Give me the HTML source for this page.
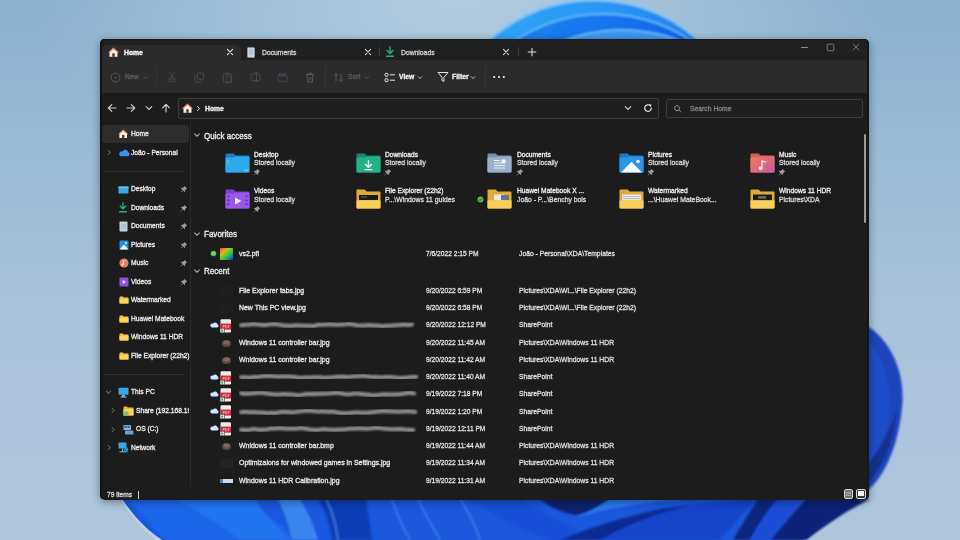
<!DOCTYPE html>
<html><head><meta charset="utf-8">
<style>
*{box-sizing:border-box;margin:0;padding:0}
html,body{width:960px;height:540px;overflow:hidden;background:#a9c3dc}
body{position:relative;font-family:"Liberation Sans",sans-serif;color:#fff}
#bg{position:absolute;left:0;top:0;width:960px;height:540px}
#win{position:absolute;left:100px;top:39px;width:769px;height:461px;background:#1c1c1c;border-radius:5px;overflow:hidden;box-shadow:0 2px 9px rgba(0,0,0,.38)}
.a{position:absolute;white-space:nowrap}
</style></head><body>
<svg id="bg" viewBox="0 0 960 540">
<defs>
 <linearGradient id="sky" x1="0" y1="0" x2="0" y2="1">
  <stop offset="0" stop-color="#8cb0cd"/>
  <stop offset="0.5" stop-color="#a5c1d9"/>
  <stop offset="0.75" stop-color="#acc4db"/>
  <stop offset="1" stop-color="#aec5dc"/>
 </linearGradient>
 <linearGradient id="arcOut" x1="0" y1="0" x2="1" y2="0">
  <stop offset="0" stop-color="#30a8f8"/>
  <stop offset="0.55" stop-color="#2a96f4"/>
  <stop offset="1" stop-color="#1f74ea"/>
 </linearGradient>
 <linearGradient id="arcMid" x1="0" y1="0" x2="1" y2="1">
  <stop offset="0" stop-color="#2290f4"/>
  <stop offset="0.55" stop-color="#0a58e6"/>
  <stop offset="1" stop-color="#0e5ce4"/>
 </linearGradient>
 <linearGradient id="bot" x1="120" y1="0" x2="870" y2="0" gradientUnits="userSpaceOnUse">
  <stop offset="0" stop-color="#2a78ec"/>
  <stop offset="0.08" stop-color="#1a62e4"/>
  <stop offset="0.16" stop-color="#1f74f0"/>
  <stop offset="0.2" stop-color="#1456dc"/>
  <stop offset="0.25" stop-color="#3a88f0"/>
  <stop offset="0.29" stop-color="#0e36a8"/>
  <stop offset="0.33" stop-color="#1a62e6"/>
  <stop offset="0.45" stop-color="#2a7af0"/>
  <stop offset="0.52" stop-color="#1452de"/>
  <stop offset="0.6" stop-color="#1a4ccc"/>
  <stop offset="0.72" stop-color="#1648d4"/>
  <stop offset="0.8" stop-color="#1238b8"/>
  <stop offset="0.86" stop-color="#1a4ed2"/>
  <stop offset="0.94" stop-color="#10329e"/>
  <stop offset="1" stop-color="#0d2680"/>
 </linearGradient>
 <radialGradient id="glow" cx="460" cy="0" r="430" gradientUnits="userSpaceOnUse" gradientTransform="translate(460 0) scale(1 0.5) translate(-460 0)">
  <stop offset="0" stop-color="#b2cce0" stop-opacity="1"/>
  <stop offset="0.5" stop-color="#acc8de" stop-opacity="0.65"/>
  <stop offset="1" stop-color="#a8c2da" stop-opacity="0"/>
 </radialGradient>
 <radialGradient id="glow2" cx="130" cy="530" r="60" gradientUnits="userSpaceOnUse">
  <stop offset="0" stop-color="#d4dde6" stop-opacity="0.9"/>
  <stop offset="1" stop-color="#c4d2e0" stop-opacity="0"/>
 </radialGradient>
 <radialGradient id="rblob" cx="0.3" cy="0.45" r="0.8">
  <stop offset="0" stop-color="#2458d4"/>
  <stop offset="1" stop-color="#1b44b8"/>
 </radialGradient>
 <filter id="soft" x="-5%" y="-5%" width="110%" height="110%"><feGaussianBlur stdDeviation="0.8"/></filter>
</defs>
<rect width="960" height="540" fill="url(#sky)"/>
<rect width="960" height="540" fill="url(#glow)"/>

<!-- top arc -->
<g filter="url(#soft)">
<ellipse cx="594" cy="119" rx="140" ry="120" fill="#7cc4f8"/>
<ellipse cx="594" cy="120" rx="138.5" ry="118.5" fill="url(#arcOut)"/>
<ellipse cx="603" cy="134" rx="141" ry="121" fill="#5cb8f8"/>
<ellipse cx="603" cy="135" rx="140" ry="120" fill="url(#arcMid)"/>
<ellipse cx="622" cy="89" rx="100" ry="60" fill="#66b6f6"/>
<ellipse cx="622" cy="90" rx="99" ry="59" fill="#3c96f0"/>
</g>
<!-- right shape -->
<g filter="url(#soft)">
<path d="M860,322 C890,336 906,372 902,408 C899,440 889,466 876,482 C856,505 830,522 804,540 L 600,540 L 600,322 Z" fill="#1b44bc"/>
<path d="M868,340 C886,360 892,390 889,418 C886,440 876,458 866,470 L 860,470 L 860,340 Z" fill="#2152d0" opacity="0.7"/>
<path d="M897,410 C894,440 885,462 873,477 C853,500 826,520 800,540 L 784,540 C 810,522 838,502 858,478 C 874,458 888,436 897,410 Z" fill="#13318f"/>
<path d="M902,408 C899,440 889,466 876,482 C856,505 830,522 804,540" stroke="#6f95dc" stroke-width="0.8" fill="none" opacity="0.6"/>
</g>
<!-- bottom -->
<path d="M122,499 C132,514 146,530 162,540 L 790,540 C 815,522 840,508 860,499 Z" fill="#1a58de"/>
<g filter="url(#soft)">
<path d="M128,499 C140,512 152,528 166,540 L 300,540 C 280,525 262,510 250,499 Z" fill="#1e66ea"/>
<path d="M175,499 C200,512 225,528 240,540 L 290,540 C 275,525 262,512 255,499 Z" fill="#2474f0"/>
<path d="M278,499 C284,512 290,528 292,540 L 318,540 C 314,526 308,512 300,499 Z" fill="#3a86ee"/>
<path d="M318,499 C326,512 330,526 332,540 L 372,540 C 370,526 368,512 366,499 Z" fill="#0f3cb6"/>
<path d="M326,499 C332,510 336,526 338,540" stroke="#5a9cf2" stroke-width="1.6" fill="none" opacity="0.7"/>
<path d="M392,499 C396,512 402,526 410,540" stroke="#4a92f0" stroke-width="1.4" fill="none" opacity="0.8"/>
<path d="M418,499 C424,512 432,526 440,540" stroke="#4a92f0" stroke-width="1.4" fill="none" opacity="0.8"/>
<path d="M460,499 C470,514 476,528 480,540" stroke="#4a92f0" stroke-width="1.4" fill="none" opacity="0.8"/>
<path d="M470,499 C490,512 520,530 550,540 L 600,540 C 570,528 540,512 520,499 Z" fill="#1650d8"/>
<path d="M540,499 L 610,499 C 600,506 590,512 575,515 C 560,512 548,506 540,499 Z" fill="#0a2070"/>
<path d="M575,518 C600,510 640,502 690,499 L 610,499 C 600,506 590,512 575,518 Z" fill="#2a7af0"/>
<path d="M560,540 C600,528 640,515 690,505 L 750,499 L 760,499 C 740,515 730,528 720,540 Z" fill="#1444cc"/>
<path d="M560,540 C590,528 620,518 660,509 L 690,505 C 650,515 620,528 600,540 Z" fill="#0c2a90"/>
<path d="M758,499 L 778,499 C 766,515 756,528 750,540 L 733,540 C 740,528 748,515 758,499 Z" fill="#0c2680"/>
<path d="M778,499 L 806,499 C 794,512 782,526 771,540 L 750,540 C 756,528 766,512 778,499 Z" fill="#1a4ed6"/>
<path d="M806,499 L 870,499 C 848,510 826,524 806,540 L 771,540 C 782,526 794,512 806,499 Z" fill="#0c2478"/>
</g>
<path d="M122,499 C132,514 146,530 162,540 L 156,540 C 142,530 130,515 120,499 Z" fill="#c8d6e4" opacity="0.6"/>
</svg>
<div id="win">
<div class="a" style="left:0.00px;top:0.00px;width:769px;height:21px;background:#202020"></div><div class="a" style="left:1.00px;top:5.50px;width:140px;height:16px;background:#2b2b2b;border-radius:6px 6px 0 0"></div><div class="a" style="left:0.00px;top:21.00px;width:769px;height:32.5px;background:#2b2b2b"></div><svg class="a" style="left:8.00px;top:8.00px" width="11.0" height="10.0" viewBox="0 0 11 10"><path d="M5.5 0.8 L10.4 5.2 L9.5 5.2 L9.5 9.8 L1.5 9.8 L1.5 5.2 L0.6 5.2 Z" fill="#fbefe4"/><path d="M5.5 0.4 L10.8 5.3 L9.9 5.9 L5.5 1.9 L1.1 5.9 L0.2 5.3 Z" fill="#d9794a"/><rect x="4.3" y="6.3" width="2.4" height="3.5" fill="#4a3530"/></svg><div class="a" style="left:23.60px;top:8.70px;font-size:7.8px;letter-spacing:0px;color:#ffffff;font-weight:bold;line-height:10px;-webkit-text-stroke:0.35px #ffffff;transform:scaleX(0.87);transform-origin:0 0;">Home</div><svg class="a" style="left:125.70px;top:8.80px" width="8" height="8" viewBox="0 0 8 8"><path d="M1.4 1.4 L6.6 6.6 M6.6 1.4 L1.4 6.6" stroke="#e6e6e6" stroke-width="1.1" stroke-linecap="round"/></svg><svg class="a" style="left:147.00px;top:7.50px" width="8" height="11" viewBox="0 0 8 11"><rect x="0.5" y="0.5" width="7" height="10" rx="0.8" fill="#c9d6e2"/><rect x="0.5" y="0.5" width="7" height="10" rx="0.8" fill="none" stroke="#8fa3b5" stroke-width="0.6"/><path d="M2 3h4M2 5h4M2 7h4" stroke="#7f93a6" stroke-width="0.6"/></svg><div class="a" style="left:162.00px;top:8.70px;font-size:7.8px;letter-spacing:0px;color:#cfcfcf;font-weight:normal;line-height:10px;-webkit-text-stroke:0.35px #cfcfcf;transform:scaleX(0.87);transform-origin:0 0;">Documents</div><svg class="a" style="left:263.50px;top:8.80px" width="8" height="8" viewBox="0 0 8 8"><path d="M1.4 1.4 L6.6 6.6 M6.6 1.4 L1.4 6.6" stroke="#d0d0d0" stroke-width="1.1" stroke-linecap="round"/></svg><div class="a" style="left:279.00px;top:8.00px;width:1px;height:9px;background:#3c3c3c"></div><svg class="a" style="left:285.00px;top:7.00px" width="10" height="12" viewBox="0 0 10 12"><path d="M5 1 V7.2 M2 4.6 L5 7.6 L8 4.6" stroke="#23b17f" stroke-width="1.4" fill="none" stroke-linecap="round" stroke-linejoin="round"/><rect x="1" y="9.6" width="8" height="1.4" rx="0.6" fill="#23b17f"/></svg><div class="a" style="left:301.00px;top:8.70px;font-size:7.8px;letter-spacing:0px;color:#cfcfcf;font-weight:normal;line-height:10px;-webkit-text-stroke:0.35px #cfcfcf;transform:scaleX(0.87);transform-origin:0 0;">Downloads</div><svg class="a" style="left:402.00px;top:8.80px" width="8" height="8" viewBox="0 0 8 8"><path d="M1.4 1.4 L6.6 6.6 M6.6 1.4 L1.4 6.6" stroke="#d0d0d0" stroke-width="1.1" stroke-linecap="round"/></svg><div class="a" style="left:418.00px;top:8.00px;width:1px;height:9px;background:#3c3c3c"></div><svg class="a" style="left:427.00px;top:8.00px" width="10" height="10" viewBox="0 0 10 10"><path d="M5 1.2 V8.8 M1.2 5 H8.8" stroke="#e0e0e0" stroke-width="1.1" stroke-linecap="round"/></svg><div class="a" style="left:701.00px;top:8.00px;width:6.5px;height:0.8px;background:#8c8c8c"></div><svg class="a" style="left:725.50px;top:3.50px" width="9" height="9" viewBox="0 0 9 9"><rect x="1.2" y="1.2" width="6.6" height="6.6" rx="1" fill="none" stroke="#8c8c8c" stroke-width="0.8"/></svg><svg class="a" style="left:752.00px;top:4.00px" width="8" height="8" viewBox="0 0 8 8"><path d="M1 1 L7 7 M7 1 L1 7" stroke="#8c8c8c" stroke-width="0.8" stroke-linecap="round"/></svg><svg class="a" style="left:10.00px;top:33.00px" width="11" height="11" viewBox="0 0 11 11"><circle cx="5.5" cy="5.5" r="4.4" fill="none" stroke="#5c5c5c" stroke-width="0.9"/><circle cx="5.5" cy="5.5" r="0.9" fill="#5c5c5c"/></svg><div class="a" style="left:25.00px;top:33.20px;font-size:7.8px;letter-spacing:0px;color:#5c5c5c;font-weight:normal;line-height:10px;-webkit-text-stroke:0.35px #5c5c5c;transform:scaleX(0.87);transform-origin:0 0;">New</div><svg class="a" style="left:42.50px;top:35.50px" width="6" height="5" viewBox="0 0 6 5"><path d="M1 1.5 L3 3.5 L5 1.5" stroke="#5c5c5c" stroke-width="0.9" fill="none"/></svg><div class="a" style="left:56.00px;top:27.00px;width:1px;height:21px;background:#353535"></div><svg class="a" style="left:67.00px;top:32.00px" width="10" height="12" viewBox="0 0 10 12"><path d="M2.5 1 L7 8 M7.5 1 L3 8" stroke="#3f4e5a" stroke-width="0.9" fill="none"/><circle cx="2.6" cy="9.3" r="1.7" fill="none" stroke="#3f4e5a" stroke-width="0.9"/><circle cx="7.4" cy="9.3" r="1.7" fill="none" stroke="#3f4e5a" stroke-width="0.9"/></svg><svg class="a" style="left:94.00px;top:33.00px" width="11" height="11" viewBox="0 0 11 11"><rect x="3.5" y="1" width="6" height="6.5" rx="1.2" fill="none" stroke="#3f4e5a" stroke-width="0.9"/><path d="M2.3 3 A1.3 1.3 0 0 0 1 4.3 V8.6 A1.4 1.4 0 0 0 2.4 10 H6.8 A1.3 1.3 0 0 0 8 8.8" fill="none" stroke="#3f4e5a" stroke-width="0.9"/></svg><svg class="a" style="left:121.50px;top:32.50px" width="11" height="11" viewBox="0 0 11 11"><rect x="1.3" y="2" width="8.4" height="8.4" rx="1.2" fill="none" stroke="#3f4e5a" stroke-width="0.9"/><rect x="3.5" y="1" width="4" height="2.2" rx="0.6" fill="none" stroke="#3f4e5a" stroke-width="0.8"/><rect x="4" y="5" width="4.5" height="5.2" fill="none" stroke="#3f4e5a" stroke-width="0.8"/></svg><svg class="a" style="left:149.50px;top:33.00px" width="11" height="10" viewBox="0 0 11 10"><rect x="1" y="2" width="9" height="6.5" rx="1" fill="none" stroke="#3f4e5a" stroke-width="0.9"/><path d="M6.5 0.8 V9.6 M5.2 0.8 H7.8 M5.2 9.6 H7.8" stroke="#3f4e5a" stroke-width="0.9"/></svg><svg class="a" style="left:177.00px;top:33.00px" width="11" height="10" viewBox="0 0 11 10"><rect x="1" y="3" width="9" height="6.3" rx="1.2" fill="none" stroke="#3f4e5a" stroke-width="0.9"/><circle cx="3.8" cy="2.8" r="1.6" fill="none" stroke="#3f4e5a" stroke-width="0.9"/><circle cx="7.2" cy="2.8" r="1.6" fill="none" stroke="#3f4e5a" stroke-width="0.9"/></svg><svg class="a" style="left:205.00px;top:32.50px" width="10" height="11" viewBox="0 0 10 11"><path d="M1 2.5 H9 M3.6 2.4 V1.1 H6.4 V2.4 M2 2.6 L2.6 10 H7.4 L8 2.6" fill="none" stroke="#5c5c5c" stroke-width="0.9"/><path d="M4.2 4.6 V8.2 M5.8 4.6 V8.2" stroke="#5c5c5c" stroke-width="0.7"/></svg><div class="a" style="left:225.00px;top:27.00px;width:1px;height:21px;background:#353535"></div><svg class="a" style="left:233.00px;top:33.00px" width="12" height="11" viewBox="0 0 12 11"><path d="M3 9.5 V1.5 M1 3.5 L3 1.5 L5 3.5 M8 1.5 V9.5 M6 7.5 L8 9.5 L10 7.5" stroke="#5c5c5c" stroke-width="0.9" fill="none"/></svg><div class="a" style="left:248.30px;top:33.20px;font-size:7.8px;letter-spacing:0px;color:#5c5c5c;font-weight:normal;line-height:10px;-webkit-text-stroke:0.35px #5c5c5c;transform:scaleX(0.87);transform-origin:0 0;">Sort</div><svg class="a" style="left:264.00px;top:35.50px" width="6" height="5" viewBox="0 0 6 5"><path d="M1 1.5 L3 3.5 L5 1.5" stroke="#5c5c5c" stroke-width="0.9" fill="none"/></svg><svg class="a" style="left:283.50px;top:32.50px" width="12" height="11" viewBox="0 0 12 11"><rect x="1" y="1.3" width="3" height="3" rx="1" fill="none" stroke="#e4e4e4" stroke-width="1"/><rect x="1" y="6.7" width="3" height="3" rx="1" fill="none" stroke="#e4e4e4" stroke-width="1"/><path d="M5.8 2.8 H11 M5.8 8.2 H11" stroke="#e4e4e4" stroke-width="1"/></svg><div class="a" style="left:299.00px;top:33.20px;font-size:7.8px;letter-spacing:0px;color:#f2f2f2;font-weight:bold;line-height:10px;-webkit-text-stroke:0.35px #f2f2f2;transform:scaleX(0.87);transform-origin:0 0;">View</div><svg class="a" style="left:317.00px;top:35.50px" width="6" height="5" viewBox="0 0 6 5"><path d="M1 1.5 L3 3.5 L5 1.5" stroke="#cfcfcf" stroke-width="0.9" fill="none"/></svg><svg class="a" style="left:336.50px;top:32.00px" width="12" height="12" viewBox="0 0 12 12"><path d="M1 1.5 H11 L7 6.3 V10.5 L5 9.3 V6.3 Z" stroke="#e4e4e4" stroke-width="1" fill="none" stroke-linejoin="round"/></svg><div class="a" style="left:351.80px;top:33.20px;font-size:7.8px;letter-spacing:0px;color:#f2f2f2;font-weight:bold;line-height:10px;-webkit-text-stroke:0.35px #f2f2f2;transform:scaleX(0.87);transform-origin:0 0;">Filter</div><svg class="a" style="left:369.50px;top:35.50px" width="6" height="5" viewBox="0 0 6 5"><path d="M1 1.5 L3 3.5 L5 1.5" stroke="#cfcfcf" stroke-width="0.9" fill="none"/></svg><div class="a" style="left:384.50px;top:27.00px;width:1px;height:21px;background:#353535"></div><svg class="a" style="left:392.00px;top:36.00px" width="14" height="4" viewBox="0 0 14 4"><circle cx="2.2" cy="2" r="1.1" fill="#eeeeee"/><circle cx="7" cy="2" r="1.1" fill="#eeeeee"/><circle cx="11.8" cy="2" r="1.1" fill="#eeeeee"/></svg><svg class="a" style="left:6.50px;top:64.00px" width="10" height="10" viewBox="0 0 10 10"><path d="M9 5 H1.5 M4.8 1.6 L1.3 5 L4.8 8.4" stroke="#cfcfcf" stroke-width="1.1" fill="none" stroke-linecap="round" stroke-linejoin="round"/></svg><svg class="a" style="left:26.00px;top:64.00px" width="10" height="10" viewBox="0 0 10 10"><path d="M1 5 H8.5 M5.2 1.6 L8.7 5 L5.2 8.4" stroke="#cfcfcf" stroke-width="1.1" fill="none" stroke-linecap="round" stroke-linejoin="round"/></svg><svg class="a" style="left:44.50px;top:66.00px" width="8" height="6" viewBox="0 0 8 6"><path d="M1.2 1.6 L4 4.4 L6.8 1.6" stroke="#cfcfcf" stroke-width="1.1" fill="none" stroke-linecap="round"/></svg><svg class="a" style="left:61.00px;top:64.00px" width="10" height="10" viewBox="0 0 10 10"><path d="M5 9 V1.5 M1.6 4.8 L5 1.3 L8.4 4.8" stroke="#dcdcdc" stroke-width="1.1" fill="none" stroke-linecap="round" stroke-linejoin="round"/></svg><div class="a" style="left:77.50px;top:59.40px;width:481px;height:20.4px;background:#1f1f1f;border:1px solid #3c3c3c;border-radius:2px"></div><svg class="a" style="left:82.00px;top:64.30px" width="11.0" height="10.0" viewBox="0 0 11 10"><path d="M5.5 0.8 L10.4 5.2 L9.5 5.2 L9.5 9.8 L1.5 9.8 L1.5 5.2 L0.6 5.2 Z" fill="#fbefe4"/><path d="M5.5 0.4 L10.8 5.3 L9.9 5.9 L5.5 1.9 L1.1 5.9 L0.2 5.3 Z" fill="#d9794a"/><rect x="4.3" y="6.3" width="2.4" height="3.5" fill="#4a3530"/></svg><svg class="a" style="left:95.50px;top:65.50px" width="5" height="7" viewBox="0 0 5 7"><path d="M1.2 1.2 L3.6 3.5 L1.2 5.8" stroke="#e0e0e0" stroke-width="1" fill="none"/></svg><div class="a" style="left:104.50px;top:64.70px;font-size:7.8px;letter-spacing:0px;color:#f2f2f2;font-weight:bold;line-height:10px;-webkit-text-stroke:0.35px #f2f2f2;transform:scaleX(0.87);transform-origin:0 0;">Home</div><svg class="a" style="left:524.00px;top:66.00px" width="8" height="6" viewBox="0 0 8 6"><path d="M1.2 1.6 L4 4.4 L6.8 1.6" stroke="#cfcfcf" stroke-width="1.1" fill="none" stroke-linecap="round"/></svg><svg class="a" style="left:543.00px;top:64.00px" width="10" height="10" viewBox="0 0 10 10"><path d="M8.3 5 A3.3 3.3 0 1 1 7.2 2.6" stroke="#e6e6e6" stroke-width="1.2" fill="none" stroke-linecap="round"/><path d="M5.6 1.2 L8.4 1.6 L7.8 4.2 Z" fill="#e6e6e6"/></svg><div class="a" style="left:566.00px;top:59.60px;width:197px;height:19.6px;background:#1f1f1f;border:1px solid #3c3c3c;border-radius:2px"></div><svg class="a" style="left:573.00px;top:64.50px" width="9" height="9" viewBox="0 0 9 9"><circle cx="4" cy="4.2" r="2.5" fill="none" stroke="#8c8c8c" stroke-width="1"/><path d="M5.9 6.1 L7.8 8" stroke="#8c8c8c" stroke-width="1" stroke-linecap="round"/></svg><div class="a" style="left:589.60px;top:64.50px;font-size:7.8px;letter-spacing:0px;color:#808080;font-weight:normal;line-height:10px;-webkit-text-stroke:0.35px #808080;transform:scaleX(0.87);transform-origin:0 0;">Search Home</div><div class="a" style="left:90.00px;top:82.00px;width:1px;height:366px;background:#2a2a2a"></div><div class="a" style="left:1.00px;top:85.70px;width:88px;height:18px;background:#2d2d2d;border-radius:4px"></div><svg class="a" style="left:17.78px;top:89.55px" width="10.45" height="9.5" viewBox="0 0 11 10"><path d="M5.5 0.8 L10.4 5.2 L9.5 5.2 L9.5 9.8 L1.5 9.8 L1.5 5.2 L0.6 5.2 Z" fill="#fbefe4"/><path d="M5.5 0.4 L10.8 5.3 L9.9 5.9 L5.5 1.9 L1.1 5.9 L0.2 5.3 Z" fill="#d9794a"/><rect x="4.3" y="6.3" width="2.4" height="3.5" fill="#4a3530"/></svg><div class="a" style="left:31.00px;top:89.70px;font-size:7.8px;letter-spacing:0px;color:#e8e8e8;font-weight:normal;line-height:10px;-webkit-text-stroke:0.35px #e8e8e8;transform:scaleX(0.855);transform-origin:0 0;">Home</div><svg class="a" style="left:5.50px;top:109.90px" width="6" height="7" viewBox="0 0 6 7"><path d="M2 1.2 L4.2 3.5 L2 5.8" stroke="#8a8a8a" stroke-width="0.9" fill="none"/></svg><svg class="a" style="left:17.50px;top:109.50px" width="12" height="8" viewBox="0 0 12 8"><path d="M3 7.2 H10 A2 2 0 0 0 10.2 3.3 A3 3 0 0 0 4.6 2.4 A2.4 2.4 0 0 0 3 7.2 Z" fill="#3f8ef0"/></svg><div class="a" style="left:31.00px;top:108.60px;font-size:7.8px;letter-spacing:0px;color:#e8e8e8;font-weight:normal;line-height:10px;-webkit-text-stroke:0.35px #e8e8e8;transform:scaleX(0.855);transform-origin:0 0;">João - Personal</div><div class="a" style="left:5.00px;top:132.00px;width:79px;height:1px;background:#333333"></div><svg class="a" style="left:18.30px;top:146.50px" width="11" height="8" viewBox="0 0 11 8"><rect x="0.5" y="0.5" width="10" height="7" rx="0.8" fill="#3aa6e6"/><rect x="0.5" y="0.5" width="10" height="2" fill="#5cc0f0"/></svg><div class="a" style="left:31.00px;top:145.20px;font-size:7.8px;letter-spacing:0px;color:#e8e8e8;font-weight:normal;line-height:10px;-webkit-text-stroke:0.35px #e8e8e8;transform:scaleX(0.855);transform-origin:0 0;">Desktop</div><svg class="a" style="left:80.30px;top:146.00px" width="8" height="8" viewBox="0 0 8 8"><path d="M4.6 0.9 L7.1 3.4 L6.2 3.9 L4.9 5.7 L5.2 6.6 L4.6 7.1 L0.9 3.4 L1.4 2.8 L2.3 3.1 L4.1 1.8 Z" fill="#9a9a9a"/><path d="M2.6 5.4 L0.8 7.2" stroke="#9a9a9a" stroke-width="0.8"/></svg><svg class="a" style="left:18.00px;top:163.00px" width="10" height="11" viewBox="0 0 10 11"><path d="M5 0.8 V6.6 M2.2 4 L5 6.9 L7.8 4" stroke="#2bb584" stroke-width="1.3" fill="none" stroke-linecap="round" stroke-linejoin="round"/><rect x="1" y="9" width="8" height="1.4" rx="0.6" fill="#2bb584"/></svg><div class="a" style="left:31.00px;top:163.70px;font-size:7.8px;letter-spacing:0px;color:#e8e8e8;font-weight:normal;line-height:10px;-webkit-text-stroke:0.35px #e8e8e8;transform:scaleX(0.855);transform-origin:0 0;">Downloads</div><svg class="a" style="left:80.30px;top:164.50px" width="8" height="8" viewBox="0 0 8 8"><path d="M4.6 0.9 L7.1 3.4 L6.2 3.9 L4.9 5.7 L5.2 6.6 L4.6 7.1 L0.9 3.4 L1.4 2.8 L2.3 3.1 L4.1 1.8 Z" fill="#9a9a9a"/><path d="M2.6 5.4 L0.8 7.2" stroke="#9a9a9a" stroke-width="0.8"/></svg><svg class="a" style="left:18.50px;top:181.50px" width="9" height="11" viewBox="0 0 9 11"><rect x="0.5" y="0.5" width="8" height="10" rx="0.8" fill="#c3cfdb"/><path d="M2 3.4h5M2 5.4h5M2 7.4h5" stroke="#8d9fb0" stroke-width="0.6"/></svg><div class="a" style="left:31.00px;top:182.20px;font-size:7.8px;letter-spacing:0px;color:#e8e8e8;font-weight:normal;line-height:10px;-webkit-text-stroke:0.35px #e8e8e8;transform:scaleX(0.855);transform-origin:0 0;">Documents</div><svg class="a" style="left:80.30px;top:183.00px" width="8" height="8" viewBox="0 0 8 8"><path d="M4.6 0.9 L7.1 3.4 L6.2 3.9 L4.9 5.7 L5.2 6.6 L4.6 7.1 L0.9 3.4 L1.4 2.8 L2.3 3.1 L4.1 1.8 Z" fill="#9a9a9a"/><path d="M2.6 5.4 L0.8 7.2" stroke="#9a9a9a" stroke-width="0.8"/></svg><svg class="a" style="left:18.50px;top:200.50px" width="10" height="10" viewBox="0 0 10 10"><rect x="0.5" y="0.5" width="9" height="9" rx="1" fill="#2a8fe0"/><path d="M0.5 9.5 L5 4.6 L9.5 9.5 Z" fill="#eef6fc"/><circle cx="7" cy="3" r="1" fill="#eef6fc"/></svg><div class="a" style="left:31.00px;top:200.70px;font-size:7.8px;letter-spacing:0px;color:#e8e8e8;font-weight:normal;line-height:10px;-webkit-text-stroke:0.35px #e8e8e8;transform:scaleX(0.855);transform-origin:0 0;">Pictures</div><svg class="a" style="left:80.30px;top:201.50px" width="8" height="8" viewBox="0 0 8 8"><path d="M4.6 0.9 L7.1 3.4 L6.2 3.9 L4.9 5.7 L5.2 6.6 L4.6 7.1 L0.9 3.4 L1.4 2.8 L2.3 3.1 L4.1 1.8 Z" fill="#9a9a9a"/><path d="M2.6 5.4 L0.8 7.2" stroke="#9a9a9a" stroke-width="0.8"/></svg><svg class="a" style="left:18.50px;top:219.00px" width="10" height="10" viewBox="0 0 10 10"><circle cx="5" cy="5" r="4.6" fill="#e0806e"/><path d="M4.4 2.4 V6.4 M4.4 2.4 L6.4 3.2" stroke="#f6dcd6" stroke-width="0.9" fill="none"/><circle cx="3.7" cy="6.6" r="1.1" fill="#f6dcd6"/></svg><div class="a" style="left:31.00px;top:219.20px;font-size:7.8px;letter-spacing:0px;color:#e8e8e8;font-weight:normal;line-height:10px;-webkit-text-stroke:0.35px #e8e8e8;transform:scaleX(0.855);transform-origin:0 0;">Music</div><svg class="a" style="left:80.30px;top:220.00px" width="8" height="8" viewBox="0 0 8 8"><path d="M4.6 0.9 L7.1 3.4 L6.2 3.9 L4.9 5.7 L5.2 6.6 L4.6 7.1 L0.9 3.4 L1.4 2.8 L2.3 3.1 L4.1 1.8 Z" fill="#9a9a9a"/><path d="M2.6 5.4 L0.8 7.2" stroke="#9a9a9a" stroke-width="0.8"/></svg><svg class="a" style="left:18.50px;top:237.50px" width="10" height="10" viewBox="0 0 10 10"><rect x="0.5" y="0.5" width="9" height="9" rx="1" fill="#8f4fe0"/><path d="M3.8 3 L7 5 L3.8 7 Z" fill="#f0e6fb"/></svg><div class="a" style="left:31.00px;top:237.70px;font-size:7.8px;letter-spacing:0px;color:#e8e8e8;font-weight:normal;line-height:10px;-webkit-text-stroke:0.35px #e8e8e8;transform:scaleX(0.855);transform-origin:0 0;">Videos</div><svg class="a" style="left:80.30px;top:238.50px" width="8" height="8" viewBox="0 0 8 8"><path d="M4.6 0.9 L7.1 3.4 L6.2 3.9 L4.9 5.7 L5.2 6.6 L4.6 7.1 L0.9 3.4 L1.4 2.8 L2.3 3.1 L4.1 1.8 Z" fill="#9a9a9a"/><path d="M2.6 5.4 L0.8 7.2" stroke="#9a9a9a" stroke-width="0.8"/></svg><svg class="a" style="left:18.50px;top:257.00px" width="10" height="8" viewBox="0 0 10 8"><path d="M0.5 1.2 Q0.5 0.5 1.2 0.5 H3.8 L4.8 1.6 H9.3 Q9.5 1.6 9.5 2.3 V7.3 Q9.5 7.5 8.8 7.5 H1.2 Q0.5 7.5 0.5 6.8 Z" fill="#f0c040"/><rect x="0.5" y="2.8" width="9" height="4.7" rx="0.6" fill="#fbd460"/></svg><div class="a" style="left:31.00px;top:256.20px;font-size:7.8px;letter-spacing:0px;color:#e8e8e8;font-weight:normal;line-height:10px;-webkit-text-stroke:0.35px #e8e8e8;transform:scaleX(0.855);transform-origin:0 0;">Watermarked</div><svg class="a" style="left:18.50px;top:275.50px" width="10" height="8" viewBox="0 0 10 8"><path d="M0.5 1.2 Q0.5 0.5 1.2 0.5 H3.8 L4.8 1.6 H9.3 Q9.5 1.6 9.5 2.3 V7.3 Q9.5 7.5 8.8 7.5 H1.2 Q0.5 7.5 0.5 6.8 Z" fill="#f0c040"/><rect x="0.5" y="2.8" width="9" height="4.7" rx="0.6" fill="#fbd460"/></svg><div class="a" style="left:31.00px;top:274.70px;font-size:7.8px;letter-spacing:0px;color:#e8e8e8;font-weight:normal;line-height:10px;-webkit-text-stroke:0.35px #e8e8e8;transform:scaleX(0.855);transform-origin:0 0;">Huawei Matebook</div><svg class="a" style="left:18.50px;top:294.00px" width="10" height="8" viewBox="0 0 10 8"><path d="M0.5 1.2 Q0.5 0.5 1.2 0.5 H3.8 L4.8 1.6 H9.3 Q9.5 1.6 9.5 2.3 V7.3 Q9.5 7.5 8.8 7.5 H1.2 Q0.5 7.5 0.5 6.8 Z" fill="#f0c040"/><rect x="0.5" y="2.8" width="9" height="4.7" rx="0.6" fill="#fbd460"/></svg><div class="a" style="left:31.00px;top:293.20px;font-size:7.8px;letter-spacing:0px;color:#e8e8e8;font-weight:normal;line-height:10px;-webkit-text-stroke:0.35px #e8e8e8;transform:scaleX(0.855);transform-origin:0 0;">Windows 11 HDR</div><svg class="a" style="left:18.50px;top:312.50px" width="10" height="8" viewBox="0 0 10 8"><path d="M0.5 1.2 Q0.5 0.5 1.2 0.5 H3.8 L4.8 1.6 H9.3 Q9.5 1.6 9.5 2.3 V7.3 Q9.5 7.5 8.8 7.5 H1.2 Q0.5 7.5 0.5 6.8 Z" fill="#f0c040"/><rect x="0.5" y="2.8" width="9" height="4.7" rx="0.6" fill="#fbd460"/></svg><div class="a" style="left:31.00px;top:311.70px;font-size:7.8px;letter-spacing:0px;color:#e8e8e8;font-weight:normal;line-height:10px;-webkit-text-stroke:0.35px #e8e8e8;transform:scaleX(0.855);transform-origin:0 0;">File Explorer (22h2)</div><div class="a" style="left:5.00px;top:334.50px;width:79px;height:1px;background:#333333"></div><svg class="a" style="left:4.90px;top:350.00px" width="7" height="6" viewBox="0 0 7 6"><path d="M1.2 2 L3.5 4.2 L5.8 2" stroke="#9a9a9a" stroke-width="0.9" fill="none"/></svg><svg class="a" style="left:18.00px;top:347.50px" width="11" height="11" viewBox="0 0 11 11"><rect x="0.5" y="0.8" width="10" height="7" rx="0.8" fill="#3aa6e6"/><rect x="4" y="8" width="3" height="1.6" fill="#7fb8de"/><rect x="2.5" y="9.5" width="6" height="1" fill="#9cc8e6"/></svg><div class="a" style="left:31.00px;top:348.20px;font-size:7.8px;letter-spacing:0px;color:#e8e8e8;font-weight:normal;line-height:10px;-webkit-text-stroke:0.35px #e8e8e8;transform:scaleX(0.855);transform-origin:0 0;">This PC</div><svg class="a" style="left:10.00px;top:368.00px" width="6" height="7" viewBox="0 0 6 7"><path d="M2 1.2 L4.2 3.5 L2 5.8" stroke="#8a8a8a" stroke-width="0.9" fill="none"/></svg><svg class="a" style="left:22.50px;top:366.50px" width="11" height="10" viewBox="0 0 11 10"><path d="M0.5 1.2 Q0.5 0.5 1.2 0.5 H4 L5 1.6 H9.8 Q10.5 1.6 10.5 2.3 V9 Q10.5 9.5 9.8 9.5 H1.2 Q0.5 9.5 0.5 9 Z" fill="#e8b830"/><rect x="0.5" y="3" width="10" height="6.5" rx="0.6" fill="#f5d060"/><rect x="0.5" y="5.5" width="5" height="4" fill="#7cc070"/></svg><div class="a" style="left:0;top:0;width:89px;height:461px;overflow:hidden"><div class="a" style="left:35.80px;top:366.70px;font-size:7.8px;letter-spacing:0px;color:#e8e8e8;font-weight:normal;line-height:10px;-webkit-text-stroke:0.35px #e8e8e8;transform:scaleX(0.855);transform-origin:0 0;">Share (192.168.19</div></div><svg class="a" style="left:10.00px;top:386.50px" width="6" height="7" viewBox="0 0 6 7"><path d="M2 1.2 L4.2 3.5 L2 5.8" stroke="#8a8a8a" stroke-width="0.9" fill="none"/></svg><svg class="a" style="left:22.50px;top:384.50px" width="11" height="11" viewBox="0 0 11 11"><rect x="0.5" y="1" width="7.5" height="5" rx="0.5" fill="#8ab4d8"/><rect x="2" y="6.5" width="8.5" height="4" rx="0.5" fill="#6aa0cc"/><rect x="1.2" y="1.8" width="2.6" height="2" fill="#2a6ab0"/><rect x="4.4" y="1.8" width="2.6" height="2" fill="#2a6ab0"/></svg><div class="a" style="left:35.80px;top:385.20px;font-size:7.8px;letter-spacing:0px;color:#e8e8e8;font-weight:normal;line-height:10px;-webkit-text-stroke:0.35px #e8e8e8;transform:scaleX(0.855);transform-origin:0 0;">OS (C:)</div><svg class="a" style="left:5.50px;top:405.00px" width="6" height="7" viewBox="0 0 6 7"><path d="M2 1.2 L4.2 3.5 L2 5.8" stroke="#8a8a8a" stroke-width="0.9" fill="none"/></svg><svg class="a" style="left:18.00px;top:403.00px" width="11" height="11" viewBox="0 0 11 11"><rect x="0.5" y="0.5" width="8" height="6" rx="0.6" fill="#3aa6e6"/><path d="M4.5 6.5 V9.5 M1.5 9.8 H9.5" stroke="#7fc0e6" stroke-width="1"/><circle cx="8" cy="7.5" r="2.2" fill="#2a8ad0"/></svg><div class="a" style="left:31.00px;top:403.70px;font-size:7.8px;letter-spacing:0px;color:#e8e8e8;font-weight:normal;line-height:10px;-webkit-text-stroke:0.35px #e8e8e8;transform:scaleX(0.855);transform-origin:0 0;">Network</div><div class="a" style="left:7.40px;top:450.60px;font-size:7.8px;letter-spacing:0px;color:#d6d6d6;font-weight:normal;line-height:10px;-webkit-text-stroke:0.35px #d6d6d6;transform:scaleX(0.85);transform-origin:0 0;">79 items</div><div class="a" style="left:38.20px;top:451.50px;width:1px;height:8px;background:#cfcfcf"></div><div class="a" style="left:743.60px;top:450.00px;width:9.6px;height:9.7px;background:#6e6e6e;border:1.2px solid #d4d4d4;border-radius:2px"></div><svg class="a" style="left:745.20px;top:451.80px" width="6.4" height="6" viewBox="0 0 6.4 6"><path d="M0.5 1.2h5.4M0.5 2.8h5.4M0.5 4.4h5.4" stroke="#bdbdbd" stroke-width="0.8"/></svg><div class="a" style="left:756.20px;top:450.00px;width:9.8px;height:9.7px;background:#3a3a3a;border:1.2px solid #d8d8d8;border-radius:2px"></div><div class="a" style="left:757.80px;top:452.20px;width:6.6px;height:4.6px;background:#f4f4f4"></div><svg class="a" style="left:93.40px;top:93.00px" width="8" height="6" viewBox="0 0 8 6"><path d="M1.3 1.6 L4 4.2 L6.7 1.6" stroke="#a8a8a8" stroke-width="1.05" fill="none"/></svg><div class="a" style="left:103.70px;top:91.50px;font-size:9.8px;letter-spacing:0px;color:#ececec;font-weight:normal;line-height:10px;-webkit-text-stroke:0.35px #ececec;transform:scaleX(0.82);transform-origin:0 0;">Quick access</div><svg class="a" style="left:93.40px;top:192.00px" width="8" height="6" viewBox="0 0 8 6"><path d="M1.3 1.6 L4 4.2 L6.7 1.6" stroke="#a8a8a8" stroke-width="1.05" fill="none"/></svg><div class="a" style="left:103.70px;top:190.20px;font-size:9.8px;letter-spacing:0px;color:#ececec;font-weight:normal;line-height:10px;-webkit-text-stroke:0.35px #ececec;transform:scaleX(0.82);transform-origin:0 0;">Favorites</div><svg class="a" style="left:93.40px;top:229.00px" width="8" height="6" viewBox="0 0 8 6"><path d="M1.3 1.6 L4 4.2 L6.7 1.6" stroke="#a8a8a8" stroke-width="1.05" fill="none"/></svg><div class="a" style="left:103.70px;top:227.20px;font-size:9.8px;letter-spacing:0px;color:#ececec;font-weight:normal;line-height:10px;-webkit-text-stroke:0.35px #ececec;transform:scaleX(0.82);transform-origin:0 0;">Recent</div><svg class="a" style="left:124.50px;top:113.80px" width="25" height="20" viewBox="0 0 25 20"><path d="M0.5 1.6 Q0.5 0.5 1.6 0.5 H8.6 L10.6 2.6 H23.4 Q24.5 2.6 24.5 3.7 V18.4 Q24.5 19.5 23.4 19.5 H1.6 Q0.5 19.5 0.5 18.4 Z" fill="#1a7cc8"/><path d="M0.5 5.6 Q0.5 4.5 1.6 4.5 H8.6 L10.6 3.4 H23.4 Q24.5 3.4 24.5 4.5 V18.4 Q24.5 19.5 23.4 19.5 H1.6 Q0.5 19.5 0.5 18.4 Z" fill="#2ea8e8"/><circle cx="3" cy="8" r="0.6" fill="#bfe6fb"/><circle cx="3" cy="10" r="0.6" fill="#bfe6fb"/><circle cx="20" cy="17.3" r="0.7" fill="#bfe6fb"/><circle cx="22" cy="17.3" r="0.7" fill="#bfe6fb"/></svg><div class="a" style="left:154.00px;top:110.50px;font-size:7.8px;letter-spacing:0px;color:#ececec;font-weight:normal;line-height:10px;-webkit-text-stroke:0.35px #ececec;transform:scaleX(0.855);transform-origin:0 0;">Desktop</div><div class="a" style="left:154.00px;top:119.30px;font-size:7.8px;letter-spacing:0px;color:#d4d4d4;font-weight:normal;line-height:10px;-webkit-text-stroke:0.35px #d4d4d4;transform:scaleX(0.875);transform-origin:0 0;">Stored locally</div><svg class="a" style="left:153.00px;top:128.50px" width="8" height="8" viewBox="0 0 8 8"><path d="M4.6 0.9 L7.1 3.4 L6.2 3.9 L4.9 5.7 L5.2 6.6 L4.6 7.1 L0.9 3.4 L1.4 2.8 L2.3 3.1 L4.1 1.8 Z" fill="#9a9a9a"/><path d="M2.6 5.4 L0.8 7.2" stroke="#9a9a9a" stroke-width="0.8"/></svg><svg class="a" style="left:256.00px;top:113.80px" width="25" height="20" viewBox="0 0 25 20"><path d="M0.5 1.6 Q0.5 0.5 1.6 0.5 H8.6 L10.6 2.6 H23.4 Q24.5 2.6 24.5 3.7 V18.4 Q24.5 19.5 23.4 19.5 H1.6 Q0.5 19.5 0.5 18.4 Z" fill="#138a6a"/><path d="M0.5 5.6 Q0.5 4.5 1.6 4.5 H8.6 L10.6 3.4 H23.4 Q24.5 3.4 24.5 4.5 V18.4 Q24.5 19.5 23.4 19.5 H1.6 Q0.5 19.5 0.5 18.4 Z" fill="#22b28a"/><path d="M12.5 7.5 V14.2 M9.6 11.4 L12.5 14.4 L15.4 11.4" stroke="#e8fbf4" stroke-width="1.4" fill="none" stroke-linecap="round" stroke-linejoin="round"/><path d="M9 16.6 H16" stroke="#e8fbf4" stroke-width="1.2" stroke-linecap="round"/></svg><div class="a" style="left:285.20px;top:110.50px;font-size:7.8px;letter-spacing:0px;color:#ececec;font-weight:normal;line-height:10px;-webkit-text-stroke:0.35px #ececec;transform:scaleX(0.855);transform-origin:0 0;">Downloads</div><div class="a" style="left:285.20px;top:119.30px;font-size:7.8px;letter-spacing:0px;color:#d4d4d4;font-weight:normal;line-height:10px;-webkit-text-stroke:0.35px #d4d4d4;transform:scaleX(0.875);transform-origin:0 0;">Stored locally</div><svg class="a" style="left:284.20px;top:128.50px" width="8" height="8" viewBox="0 0 8 8"><path d="M4.6 0.9 L7.1 3.4 L6.2 3.9 L4.9 5.7 L5.2 6.6 L4.6 7.1 L0.9 3.4 L1.4 2.8 L2.3 3.1 L4.1 1.8 Z" fill="#9a9a9a"/><path d="M2.6 5.4 L0.8 7.2" stroke="#9a9a9a" stroke-width="0.8"/></svg><svg class="a" style="left:387.40px;top:113.80px" width="25" height="20" viewBox="0 0 25 20"><path d="M0.5 1.6 Q0.5 0.5 1.6 0.5 H8.6 L10.6 2.6 H23.4 Q24.5 2.6 24.5 3.7 V18.4 Q24.5 19.5 23.4 19.5 H1.6 Q0.5 19.5 0.5 18.4 Z" fill="#7890b0"/><path d="M0.5 5.6 Q0.5 4.5 1.6 4.5 H8.6 L10.6 3.4 H23.4 Q24.5 3.4 24.5 4.5 V18.4 Q24.5 19.5 23.4 19.5 H1.6 Q0.5 19.5 0.5 18.4 Z" fill="#9cb0cc"/><rect x="14.5" y="6.5" width="4" height="3.5" rx="0.5" fill="#eef2f8"/><path d="M7 7.5h6M7 10h11M7 12.5h11M7 15h11" stroke="#eef2f8" stroke-width="1.1"/></svg><div class="a" style="left:416.70px;top:110.50px;font-size:7.8px;letter-spacing:0px;color:#ececec;font-weight:normal;line-height:10px;-webkit-text-stroke:0.35px #ececec;transform:scaleX(0.855);transform-origin:0 0;">Documents</div><div class="a" style="left:416.70px;top:119.30px;font-size:7.8px;letter-spacing:0px;color:#d4d4d4;font-weight:normal;line-height:10px;-webkit-text-stroke:0.35px #d4d4d4;transform:scaleX(0.875);transform-origin:0 0;">Stored locally</div><svg class="a" style="left:415.70px;top:128.50px" width="8" height="8" viewBox="0 0 8 8"><path d="M4.6 0.9 L7.1 3.4 L6.2 3.9 L4.9 5.7 L5.2 6.6 L4.6 7.1 L0.9 3.4 L1.4 2.8 L2.3 3.1 L4.1 1.8 Z" fill="#9a9a9a"/><path d="M2.6 5.4 L0.8 7.2" stroke="#9a9a9a" stroke-width="0.8"/></svg><svg class="a" style="left:518.70px;top:113.80px" width="25" height="20" viewBox="0 0 25 20"><path d="M0.5 1.6 Q0.5 0.5 1.6 0.5 H8.6 L10.6 2.6 H23.4 Q24.5 2.6 24.5 3.7 V18.4 Q24.5 19.5 23.4 19.5 H1.6 Q0.5 19.5 0.5 18.4 Z" fill="#1b78c8"/><path d="M0.5 5.6 Q0.5 4.5 1.6 4.5 H8.6 L10.6 3.4 H23.4 Q24.5 3.4 24.5 4.5 V18.4 Q24.5 19.5 23.4 19.5 H1.6 Q0.5 19.5 0.5 18.4 Z" fill="#2b96e6"/><path d="M2 19.5 L12.5 8.8 L23 19.5 Z" fill="#f4faff"/><circle cx="19" cy="8.5" r="1.8" fill="#f4faff"/></svg><div class="a" style="left:548.00px;top:110.50px;font-size:7.8px;letter-spacing:0px;color:#ececec;font-weight:normal;line-height:10px;-webkit-text-stroke:0.35px #ececec;transform:scaleX(0.855);transform-origin:0 0;">Pictures</div><div class="a" style="left:548.00px;top:119.30px;font-size:7.8px;letter-spacing:0px;color:#d4d4d4;font-weight:normal;line-height:10px;-webkit-text-stroke:0.35px #d4d4d4;transform:scaleX(0.875);transform-origin:0 0;">Stored locally</div><svg class="a" style="left:547.00px;top:128.50px" width="8" height="8" viewBox="0 0 8 8"><path d="M4.6 0.9 L7.1 3.4 L6.2 3.9 L4.9 5.7 L5.2 6.6 L4.6 7.1 L0.9 3.4 L1.4 2.8 L2.3 3.1 L4.1 1.8 Z" fill="#9a9a9a"/><path d="M2.6 5.4 L0.8 7.2" stroke="#9a9a9a" stroke-width="0.8"/></svg><svg class="a" style="left:650.00px;top:113.80px" width="25" height="20" viewBox="0 0 25 20"><path d="M0.5 1.6 Q0.5 0.5 1.6 0.5 H8.6 L10.6 2.6 H23.4 Q24.5 2.6 24.5 3.7 V18.4 Q24.5 19.5 23.4 19.5 H1.6 Q0.5 19.5 0.5 18.4 Z" fill="#d06060"/><path d="M0.5 5.6 Q0.5 4.5 1.6 4.5 H8.6 L10.6 3.4 H23.4 Q24.5 3.4 24.5 4.5 V18.4 Q24.5 19.5 23.4 19.5 H1.6 Q0.5 19.5 0.5 18.4 Z" fill="url(#mg)"/><defs><linearGradient id="mg" x1="0" y1="0" x2="1" y2="1"><stop offset="0" stop-color="#f47a56"/><stop offset="1" stop-color="#c85aa6"/></linearGradient></defs><path d="M12 7.8 V15 M12 7.8 L15.5 9.2" stroke="#fde8e4" stroke-width="1.3" fill="none" stroke-linecap="round"/><circle cx="10.6" cy="15.2" r="1.9" fill="#fde8e4"/></svg><div class="a" style="left:679.40px;top:110.50px;font-size:7.8px;letter-spacing:0px;color:#ececec;font-weight:normal;line-height:10px;-webkit-text-stroke:0.35px #ececec;transform:scaleX(0.855);transform-origin:0 0;">Music</div><div class="a" style="left:679.40px;top:119.30px;font-size:7.8px;letter-spacing:0px;color:#d4d4d4;font-weight:normal;line-height:10px;-webkit-text-stroke:0.35px #d4d4d4;transform:scaleX(0.875);transform-origin:0 0;">Stored locally</div><svg class="a" style="left:678.40px;top:128.50px" width="8" height="8" viewBox="0 0 8 8"><path d="M4.6 0.9 L7.1 3.4 L6.2 3.9 L4.9 5.7 L5.2 6.6 L4.6 7.1 L0.9 3.4 L1.4 2.8 L2.3 3.1 L4.1 1.8 Z" fill="#9a9a9a"/><path d="M2.6 5.4 L0.8 7.2" stroke="#9a9a9a" stroke-width="0.8"/></svg><svg class="a" style="left:124.50px;top:150.00px" width="25" height="20" viewBox="0 0 25 20"><path d="M0.5 1.6 Q0.5 0.5 1.6 0.5 H8.6 L10.6 2.6 H23.4 Q24.5 2.6 24.5 3.7 V18.4 Q24.5 19.5 23.4 19.5 H1.6 Q0.5 19.5 0.5 18.4 Z" fill="#7a3fd0"/><path d="M0.5 5.6 Q0.5 4.5 1.6 4.5 H8.6 L10.6 3.4 H23.4 Q24.5 3.4 24.5 4.5 V18.4 Q24.5 19.5 23.4 19.5 H1.6 Q0.5 19.5 0.5 18.4 Z" fill="#9a58ea"/><rect x="2.5" y="6.5" width="2" height="1.6" fill="#5a28a8"/><rect x="2.5" y="10.5" width="2" height="1.6" fill="#5a28a8"/><rect x="2.5" y="14.5" width="2" height="1.6" fill="#5a28a8"/><rect x="20.5" y="6.5" width="2" height="1.6" fill="#5a28a8"/><rect x="20.5" y="10.5" width="2" height="1.6" fill="#5a28a8"/><rect x="20.5" y="14.5" width="2" height="1.6" fill="#5a28a8"/><path d="M10 8.5 L16.5 12 L10 15.5 Z" fill="#f3eafd"/></svg><div class="a" style="left:154.00px;top:147.30px;font-size:7.8px;letter-spacing:0px;color:#ececec;font-weight:normal;line-height:10px;-webkit-text-stroke:0.35px #ececec;transform:scaleX(0.855);transform-origin:0 0;">Videos</div><div class="a" style="left:154.00px;top:156.10px;font-size:7.8px;letter-spacing:0px;color:#d4d4d4;font-weight:normal;line-height:10px;-webkit-text-stroke:0.35px #d4d4d4;transform:scaleX(0.875);transform-origin:0 0;">Stored locally</div><svg class="a" style="left:153.00px;top:165.50px" width="8" height="8" viewBox="0 0 8 8"><path d="M4.6 0.9 L7.1 3.4 L6.2 3.9 L4.9 5.7 L5.2 6.6 L4.6 7.1 L0.9 3.4 L1.4 2.8 L2.3 3.1 L4.1 1.8 Z" fill="#9a9a9a"/><path d="M2.6 5.4 L0.8 7.2" stroke="#9a9a9a" stroke-width="0.8"/></svg><svg class="a" style="left:256.00px;top:150.00px" width="25" height="20" viewBox="0 0 25 20"><path d="M0.5 1.6 Q0.5 0.5 1.6 0.5 H8.6 L10.6 2.6 H23.4 Q24.5 2.6 24.5 3.7 V18.4 Q24.5 19.5 23.4 19.5 H1.6 Q0.5 19.5 0.5 18.4 Z" fill="#e0a93a"/><rect x="3" y="6" width="19" height="5" fill="#1a1a1a"/><rect x="5" y="7.5" width="6" height="1" fill="#6a6a6a"/><path d="M0.5 12.2 Q0.5 11.2 1.6 11.2 H23.4 Q24.5 11.2 24.5 12.2 V18.4 Q24.5 19.5 23.4 19.5 H1.6 Q0.5 19.5 0.5 18.4 Z" fill="#f8cf5a"/></svg><div class="a" style="left:285.20px;top:147.30px;font-size:7.8px;letter-spacing:0px;color:#ececec;font-weight:normal;line-height:10px;-webkit-text-stroke:0.35px #ececec;transform:scaleX(0.855);transform-origin:0 0;">File Explorer (22h2)</div><div class="a" style="left:285.20px;top:156.10px;font-size:7.8px;letter-spacing:0px;color:#d4d4d4;font-weight:normal;line-height:10px;-webkit-text-stroke:0.35px #d4d4d4;transform:scaleX(0.875);transform-origin:0 0;">P...\Windows 11 guides</div><svg class="a" style="left:387.40px;top:150.00px" width="25" height="20" viewBox="0 0 25 20"><path d="M0.5 1.6 Q0.5 0.5 1.6 0.5 H8.6 L10.6 2.6 H23.4 Q24.5 2.6 24.5 3.7 V18.4 Q24.5 19.5 23.4 19.5 H1.6 Q0.5 19.5 0.5 18.4 Z" fill="#e0a93a"/><rect x="7" y="5.5" width="10" height="6" fill="#e8e8e8"/><rect x="14" y="6" width="8" height="5" fill="#5a7a9a"/><path d="M0.5 12.2 Q0.5 11.2 1.6 11.2 H23.4 Q24.5 11.2 24.5 12.2 V18.4 Q24.5 19.5 23.4 19.5 H1.6 Q0.5 19.5 0.5 18.4 Z" fill="#f8cf5a"/></svg><div class="a" style="left:416.70px;top:147.30px;font-size:7.8px;letter-spacing:0px;color:#ececec;font-weight:normal;line-height:10px;-webkit-text-stroke:0.35px #ececec;transform:scaleX(0.855);transform-origin:0 0;">Huawei Matebook X ...</div><div class="a" style="left:416.70px;top:156.10px;font-size:7.8px;letter-spacing:0px;color:#d4d4d4;font-weight:normal;line-height:10px;-webkit-text-stroke:0.35px #d4d4d4;transform:scaleX(0.875);transform-origin:0 0;">João - P...\Benchy bois</div><svg class="a" style="left:518.70px;top:150.00px" width="25" height="20" viewBox="0 0 25 20"><path d="M0.5 1.6 Q0.5 0.5 1.6 0.5 H8.6 L10.6 2.6 H23.4 Q24.5 2.6 24.5 3.7 V18.4 Q24.5 19.5 23.4 19.5 H1.6 Q0.5 19.5 0.5 18.4 Z" fill="#e0a93a"/><rect x="3" y="5.5" width="19" height="6" fill="#e8e8e8"/><path d="M4 7.5h17M4 9.5h17" stroke="#b0b0b0" stroke-width="0.8"/><path d="M0.5 12.2 Q0.5 11.2 1.6 11.2 H23.4 Q24.5 11.2 24.5 12.2 V18.4 Q24.5 19.5 23.4 19.5 H1.6 Q0.5 19.5 0.5 18.4 Z" fill="#f8cf5a"/></svg><div class="a" style="left:548.00px;top:147.30px;font-size:7.8px;letter-spacing:0px;color:#ececec;font-weight:normal;line-height:10px;-webkit-text-stroke:0.35px #ececec;transform:scaleX(0.855);transform-origin:0 0;">Watermarked</div><div class="a" style="left:548.00px;top:156.10px;font-size:7.8px;letter-spacing:0px;color:#d4d4d4;font-weight:normal;line-height:10px;-webkit-text-stroke:0.35px #d4d4d4;transform:scaleX(0.875);transform-origin:0 0;">...\Huawei MateBook...</div><svg class="a" style="left:650.00px;top:150.00px" width="25" height="20" viewBox="0 0 25 20"><path d="M0.5 1.6 Q0.5 0.5 1.6 0.5 H8.6 L10.6 2.6 H23.4 Q24.5 2.6 24.5 3.7 V18.4 Q24.5 19.5 23.4 19.5 H1.6 Q0.5 19.5 0.5 18.4 Z" fill="#e0a93a"/><rect x="3" y="5.5" width="19" height="6" fill="#1a1a1a"/><rect x="8" y="7.2" width="8" height="2.5" fill="#6a6a6a"/><path d="M0.5 12.2 Q0.5 11.2 1.6 11.2 H23.4 Q24.5 11.2 24.5 12.2 V18.4 Q24.5 19.5 23.4 19.5 H1.6 Q0.5 19.5 0.5 18.4 Z" fill="#f8cf5a"/></svg><div class="a" style="left:679.40px;top:147.30px;font-size:7.8px;letter-spacing:0px;color:#ececec;font-weight:normal;line-height:10px;-webkit-text-stroke:0.35px #ececec;transform:scaleX(0.855);transform-origin:0 0;">Windows 11 HDR</div><div class="a" style="left:679.40px;top:156.10px;font-size:7.8px;letter-spacing:0px;color:#d4d4d4;font-weight:normal;line-height:10px;-webkit-text-stroke:0.35px #d4d4d4;transform:scaleX(0.875);transform-origin:0 0;">Pictures\XDA</div><svg class="a" style="left:376.50px;top:156.50px" width="7" height="7" viewBox="0 0 7 7"><circle cx="3.5" cy="3.5" r="3" fill="#5fb85a"/><path d="M2 3.6 L3.1 4.6 L5 2.6" stroke="#1c1c1c" stroke-width="0.8" fill="none"/></svg><div class="a" style="left:764.20px;top:94.90px;width:1.6px;height:89px;background:#9a9a9a;border-radius:1px"></div><svg class="a" style="left:109.80px;top:210.90px" width="7" height="7" viewBox="0 0 7 7"><circle cx="3.5" cy="3.5" r="3.2" fill="#1e4a1e"/><circle cx="3.5" cy="3.5" r="2.6" fill="#6cd06c"/></svg><svg class="a" style="left:119.80px;top:208.90px" width="13" height="12" viewBox="0 0 13 12"><defs><linearGradient id="rg" x1="0" y1="0" x2="1" y2="1"><stop offset="0" stop-color="#f04a1c"/><stop offset="0.3" stop-color="#e8b020"/><stop offset="0.5" stop-color="#60d020"/><stop offset="0.72" stop-color="#18a880"/><stop offset="1" stop-color="#1030c0"/></linearGradient></defs><rect x="0" y="0" width="13" height="12" rx="0.8" fill="url(#rg)"/></svg><div class="a" style="left:138.50px;top:210.10px;font-size:7.8px;letter-spacing:0px;color:#e4e4e4;font-weight:normal;line-height:10px;-webkit-text-stroke:0.35px #e4e4e4;transform:scaleX(0.89);transform-origin:0 0;">vs2.pfi</div><div class="a" style="left:325.50px;top:210.10px;font-size:7.8px;letter-spacing:0px;color:#dcdcdc;font-weight:normal;line-height:10px;-webkit-text-stroke:0.35px #dcdcdc;transform:scaleX(0.853);transform-origin:0 0;">7/6/2022 2:15 PM</div><div class="a" style="left:419.30px;top:210.10px;font-size:7.8px;letter-spacing:0px;color:#dcdcdc;font-weight:normal;line-height:10px;-webkit-text-stroke:0.35px #dcdcdc;transform:scaleX(0.868);transform-origin:0 0;">João - Personal\XDA\Templates</div><div class="a" style="left:120.00px;top:247.40px;width:13px;height:9px;background:#1f1f1f"></div><div class="a" style="left:138.75px;top:246.90px;font-size:7.8px;letter-spacing:0px;color:#e4e4e4;font-weight:normal;line-height:10px;-webkit-text-stroke:0.35px #e4e4e4;transform:scaleX(0.89);transform-origin:0 0;">File Explorer tabs.jpg</div><div class="a" style="left:325.50px;top:246.90px;font-size:7.8px;letter-spacing:0px;color:#dcdcdc;font-weight:normal;line-height:10px;-webkit-text-stroke:0.35px #dcdcdc;transform:scaleX(0.853);transform-origin:0 0;">9/20/2022 6:59 PM</div><div class="a" style="left:419.30px;top:246.90px;font-size:7.8px;letter-spacing:0px;color:#dcdcdc;font-weight:normal;line-height:10px;-webkit-text-stroke:0.35px #dcdcdc;transform:scaleX(0.868);transform-origin:0 0;">Pictures\XDA\Wi...\File Explorer (22h2)</div><div class="a" style="left:120.00px;top:264.65px;width:13px;height:9px;background:#1f1f1f"></div><div class="a" style="left:138.75px;top:264.15px;font-size:7.8px;letter-spacing:0px;color:#e4e4e4;font-weight:normal;line-height:10px;-webkit-text-stroke:0.35px #e4e4e4;transform:scaleX(0.89);transform-origin:0 0;">New This PC view.jpg</div><div class="a" style="left:325.50px;top:264.15px;font-size:7.8px;letter-spacing:0px;color:#dcdcdc;font-weight:normal;line-height:10px;-webkit-text-stroke:0.35px #dcdcdc;transform:scaleX(0.853);transform-origin:0 0;">9/20/2022 6:58 PM</div><div class="a" style="left:419.30px;top:264.15px;font-size:7.8px;letter-spacing:0px;color:#dcdcdc;font-weight:normal;line-height:10px;-webkit-text-stroke:0.35px #dcdcdc;transform:scaleX(0.868);transform-origin:0 0;">Pictures\XDA\Wi...\File Explorer (22h2)</div><svg class="a" style="left:108.50px;top:281.90px" width="11" height="9" viewBox="0 0 11 9"><ellipse cx="5.5" cy="4.5" rx="5.2" ry="4" fill="#0f2238"/><path d="M2.6 6.4 H8.2 A1.6 1.6 0 0 0 8.4 3.3 A2.4 2.4 0 0 0 4 2.7 A1.9 1.9 0 0 0 2.6 6.4 Z" fill="#d6e6f8"/></svg><svg class="a" style="left:120.20px;top:279.90px" width="12" height="14" viewBox="0 0 12 14"><rect x="0.5" y="0.3" width="10.5" height="13.2" rx="1.2" fill="#f0eaea"/><rect x="0.5" y="4.6" width="10.5" height="6" fill="#d42034"/><path d="M3 6.3 V9 M3 6.3 H4.4 V7.5 H3 M5.5 6.3 V9 H6.5 Q7.2 9 7.2 7.6 Q7.2 6.3 6.5 6.3 Z M8.4 9 V6.3 H9.8 M8.4 7.6 H9.5" stroke="#f6c8cc" stroke-width="0.6" fill="none"/><rect x="0" y="9.2" width="4.4" height="4.6" fill="#e6efe6" stroke="#222" stroke-width="0.5"/><rect x="1.2" y="10.6" width="2" height="2" fill="#6a8a6a"/></svg><svg class="a" style="left:138.75px;top:280.40px" width="177" height="12" viewBox="0 0 177 12"><defs><filter id="bl2" x="-10%" y="-50%" width="120%" height="200%"><feGaussianBlur stdDeviation="1.1"/></filter></defs><polyline points="2.0,6.2 6.3,5.8 10.6,5.4 14.8,4.9 19.1,5.5 23.4,5.9 27.7,5.9 31.9,5.2 36.2,5.1 40.5,5.7 44.8,6.6 49.0,6.7 53.3,6.8 57.6,6.3 61.9,6.5 66.1,6.8 70.4,6.7 74.7,7.0 79.0,5.8 83.2,5.7 87.5,5.5 91.8,5.2 96.1,5.8 100.4,5.7 104.6,5.6 108.9,4.9 113.2,5.3 117.5,6.2 121.7,6.5 126.0,6.4 130.3,6.0 134.6,6.5 138.8,6.5 143.1,7.3 147.4,6.8 151.7,6.8 155.9,6.2 160.2,6.0 164.5,5.4 168.8,5.9 173.1,5.5" stroke="#a6a6a6" stroke-width="4" fill="none" stroke-linecap="round" stroke-linejoin="round" opacity="0.85" filter="url(#bl2)"/></svg><div class="a" style="left:325.50px;top:281.40px;font-size:7.8px;letter-spacing:0px;color:#dcdcdc;font-weight:normal;line-height:10px;-webkit-text-stroke:0.35px #dcdcdc;transform:scaleX(0.853);transform-origin:0 0;">9/20/2022 12:12 PM</div><div class="a" style="left:419.30px;top:281.40px;font-size:7.8px;letter-spacing:0px;color:#dcdcdc;font-weight:normal;line-height:10px;-webkit-text-stroke:0.35px #dcdcdc;transform:scaleX(0.868);transform-origin:0 0;">SharePoint</div><svg class="a" style="left:120.00px;top:298.65px" width="13" height="10" viewBox="0 0 13 10"><ellipse cx="6.5" cy="5.5" rx="4.5" ry="3.6" fill="#5a4a44"/><ellipse cx="6.5" cy="4.5" rx="3" ry="2" fill="#7a6a60"/></svg><div class="a" style="left:138.75px;top:298.65px;font-size:7.8px;letter-spacing:0px;color:#e4e4e4;font-weight:normal;line-height:10px;-webkit-text-stroke:0.35px #e4e4e4;transform:scaleX(0.89);transform-origin:0 0;">Windows 11 controller bar.jpg</div><div class="a" style="left:325.50px;top:298.65px;font-size:7.8px;letter-spacing:0px;color:#dcdcdc;font-weight:normal;line-height:10px;-webkit-text-stroke:0.35px #dcdcdc;transform:scaleX(0.853);transform-origin:0 0;">9/20/2022 11:45 AM</div><div class="a" style="left:419.30px;top:298.65px;font-size:7.8px;letter-spacing:0px;color:#dcdcdc;font-weight:normal;line-height:10px;-webkit-text-stroke:0.35px #dcdcdc;transform:scaleX(0.868);transform-origin:0 0;">Pictures\XDA\Windows 11 HDR</div><svg class="a" style="left:120.00px;top:315.90px" width="13" height="10" viewBox="0 0 13 10"><ellipse cx="6.5" cy="5.5" rx="4.5" ry="3.6" fill="#5a4a44"/><ellipse cx="6.5" cy="4.5" rx="3" ry="2" fill="#7a6a60"/></svg><div class="a" style="left:138.75px;top:315.90px;font-size:7.8px;letter-spacing:0px;color:#e4e4e4;font-weight:normal;line-height:10px;-webkit-text-stroke:0.35px #e4e4e4;transform:scaleX(0.89);transform-origin:0 0;">Wnidows 11 controller bar.jpg</div><div class="a" style="left:325.50px;top:315.90px;font-size:7.8px;letter-spacing:0px;color:#dcdcdc;font-weight:normal;line-height:10px;-webkit-text-stroke:0.35px #dcdcdc;transform:scaleX(0.853);transform-origin:0 0;">9/20/2022 11:42 AM</div><div class="a" style="left:419.30px;top:315.90px;font-size:7.8px;letter-spacing:0px;color:#dcdcdc;font-weight:normal;line-height:10px;-webkit-text-stroke:0.35px #dcdcdc;transform:scaleX(0.868);transform-origin:0 0;">Pictures\XDA\Windows 11 HDR</div><svg class="a" style="left:108.50px;top:333.65px" width="11" height="9" viewBox="0 0 11 9"><ellipse cx="5.5" cy="4.5" rx="5.2" ry="4" fill="#0f2238"/><path d="M2.6 6.4 H8.2 A1.6 1.6 0 0 0 8.4 3.3 A2.4 2.4 0 0 0 4 2.7 A1.9 1.9 0 0 0 2.6 6.4 Z" fill="#d6e6f8"/></svg><svg class="a" style="left:120.20px;top:331.65px" width="12" height="14" viewBox="0 0 12 14"><rect x="0.5" y="0.3" width="10.5" height="13.2" rx="1.2" fill="#f0eaea"/><rect x="0.5" y="4.6" width="10.5" height="6" fill="#d42034"/><path d="M3 6.3 V9 M3 6.3 H4.4 V7.5 H3 M5.5 6.3 V9 H6.5 Q7.2 9 7.2 7.6 Q7.2 6.3 6.5 6.3 Z M8.4 9 V6.3 H9.8 M8.4 7.6 H9.5" stroke="#f6c8cc" stroke-width="0.6" fill="none"/><rect x="0" y="9.2" width="4.4" height="4.6" fill="#e6efe6" stroke="#222" stroke-width="0.5"/><rect x="1.2" y="10.6" width="2" height="2" fill="#6a8a6a"/></svg><svg class="a" style="left:138.75px;top:332.15px" width="181" height="12" viewBox="0 0 181 12"><defs><filter id="bl5" x="-10%" y="-50%" width="120%" height="200%"><feGaussianBlur stdDeviation="1.1"/></filter></defs><polyline points="2.0,6.3 6.4,6.3 10.8,6.7 15.1,6.0 19.5,5.9 23.9,5.1 28.3,5.1 32.7,5.1 37.0,5.6 41.4,5.5 45.8,5.3 50.2,5.5 54.6,5.7 59.0,6.7 63.3,6.8 67.7,6.5 72.1,6.5 76.5,6.3 80.9,6.3 85.2,6.9 89.6,6.4 94.0,6.2 98.4,5.7 102.8,5.5 107.2,5.9 111.5,5.8 115.9,5.3 120.3,5.2 124.7,4.8 129.1,5.4 133.4,6.1 137.8,6.0 142.2,6.6 146.6,6.0 151.0,5.9 155.3,6.4 159.7,6.9 164.1,6.9 168.5,6.5 172.9,6.1 177.2,6.0" stroke="#a6a6a6" stroke-width="4" fill="none" stroke-linecap="round" stroke-linejoin="round" opacity="0.85" filter="url(#bl5)"/></svg><div class="a" style="left:325.50px;top:333.15px;font-size:7.8px;letter-spacing:0px;color:#dcdcdc;font-weight:normal;line-height:10px;-webkit-text-stroke:0.35px #dcdcdc;transform:scaleX(0.853);transform-origin:0 0;">9/20/2022 11:40 AM</div><div class="a" style="left:419.30px;top:333.15px;font-size:7.8px;letter-spacing:0px;color:#dcdcdc;font-weight:normal;line-height:10px;-webkit-text-stroke:0.35px #dcdcdc;transform:scaleX(0.868);transform-origin:0 0;">SharePoint</div><svg class="a" style="left:108.50px;top:350.90px" width="11" height="9" viewBox="0 0 11 9"><ellipse cx="5.5" cy="4.5" rx="5.2" ry="4" fill="#0f2238"/><path d="M2.6 6.4 H8.2 A1.6 1.6 0 0 0 8.4 3.3 A2.4 2.4 0 0 0 4 2.7 A1.9 1.9 0 0 0 2.6 6.4 Z" fill="#d6e6f8"/></svg><svg class="a" style="left:120.20px;top:348.90px" width="12" height="14" viewBox="0 0 12 14"><rect x="0.5" y="0.3" width="10.5" height="13.2" rx="1.2" fill="#f0eaea"/><rect x="0.5" y="4.6" width="10.5" height="6" fill="#d42034"/><path d="M3 6.3 V9 M3 6.3 H4.4 V7.5 H3 M5.5 6.3 V9 H6.5 Q7.2 9 7.2 7.6 Q7.2 6.3 6.5 6.3 Z M8.4 9 V6.3 H9.8 M8.4 7.6 H9.5" stroke="#f6c8cc" stroke-width="0.6" fill="none"/><rect x="0" y="9.2" width="4.4" height="4.6" fill="#e6efe6" stroke="#222" stroke-width="0.5"/><rect x="1.2" y="10.6" width="2" height="2" fill="#6a8a6a"/></svg><svg class="a" style="left:138.75px;top:349.40px" width="179" height="12" viewBox="0 0 179 12"><defs><filter id="bl6" x="-10%" y="-50%" width="120%" height="200%"><feGaussianBlur stdDeviation="1.1"/></filter></defs><polyline points="2.0,5.2 6.3,5.7 10.7,5.4 15.0,5.3 19.3,4.8 23.7,4.8 28.0,5.6 32.3,6.1 36.6,6.4 41.0,6.5 45.3,5.9 49.6,6.5 54.0,6.6 58.3,7.3 62.6,6.9 67.0,6.0 71.3,6.0 75.6,5.9 80.0,5.7 84.3,5.8 88.6,5.6 93.0,5.3 97.3,4.7 101.6,5.2 106.0,6.1 110.3,6.4 114.6,5.6 118.9,5.5 123.3,6.3 127.6,6.5 131.9,7.0 136.3,7.2 140.6,6.7 144.9,6.3 149.3,6.4 153.6,6.5 157.9,6.6 162.3,6.0 166.6,5.3 170.9,4.7 175.2,5.5" stroke="#a6a6a6" stroke-width="4" fill="none" stroke-linecap="round" stroke-linejoin="round" opacity="0.85" filter="url(#bl6)"/></svg><div class="a" style="left:325.50px;top:350.40px;font-size:7.8px;letter-spacing:0px;color:#dcdcdc;font-weight:normal;line-height:10px;-webkit-text-stroke:0.35px #dcdcdc;transform:scaleX(0.853);transform-origin:0 0;">9/19/2022 7:18 PM</div><div class="a" style="left:419.30px;top:350.40px;font-size:7.8px;letter-spacing:0px;color:#dcdcdc;font-weight:normal;line-height:10px;-webkit-text-stroke:0.35px #dcdcdc;transform:scaleX(0.868);transform-origin:0 0;">SharePoint</div><svg class="a" style="left:108.50px;top:368.15px" width="11" height="9" viewBox="0 0 11 9"><ellipse cx="5.5" cy="4.5" rx="5.2" ry="4" fill="#0f2238"/><path d="M2.6 6.4 H8.2 A1.6 1.6 0 0 0 8.4 3.3 A2.4 2.4 0 0 0 4 2.7 A1.9 1.9 0 0 0 2.6 6.4 Z" fill="#d6e6f8"/></svg><svg class="a" style="left:120.20px;top:366.15px" width="12" height="14" viewBox="0 0 12 14"><rect x="0.5" y="0.3" width="10.5" height="13.2" rx="1.2" fill="#f0eaea"/><rect x="0.5" y="4.6" width="10.5" height="6" fill="#d42034"/><path d="M3 6.3 V9 M3 6.3 H4.4 V7.5 H3 M5.5 6.3 V9 H6.5 Q7.2 9 7.2 7.6 Q7.2 6.3 6.5 6.3 Z M8.4 9 V6.3 H9.8 M8.4 7.6 H9.5" stroke="#f6c8cc" stroke-width="0.6" fill="none"/><rect x="0" y="9.2" width="4.4" height="4.6" fill="#e6efe6" stroke="#222" stroke-width="0.5"/><rect x="1.2" y="10.6" width="2" height="2" fill="#6a8a6a"/></svg><svg class="a" style="left:138.75px;top:366.65px" width="180" height="12" viewBox="0 0 180 12"><defs><filter id="bl7" x="-10%" y="-50%" width="120%" height="200%"><feGaussianBlur stdDeviation="1.1"/></filter></defs><polyline points="2.0,6.2 6.4,5.8 10.7,6.2 15.1,5.9 19.4,6.4 23.8,6.5 28.1,7.3 32.5,6.8 36.9,7.0 41.2,6.1 45.6,5.8 49.9,6.1 54.3,6.4 58.6,5.6 63.0,5.3 67.3,4.6 71.7,4.8 76.1,5.3 80.4,5.6 84.8,5.5 89.1,5.7 93.5,5.5 97.8,6.4 102.2,7.0 106.5,7.2 110.9,7.0 115.3,6.4 119.6,6.4 124.0,6.8 128.3,6.8 132.7,6.2 137.0,5.8 141.4,5.3 145.8,5.0 150.1,5.2 154.5,5.5 158.8,5.7 163.2,5.4 167.5,5.3 171.9,5.6 176.2,5.9" stroke="#a6a6a6" stroke-width="4" fill="none" stroke-linecap="round" stroke-linejoin="round" opacity="0.85" filter="url(#bl7)"/></svg><div class="a" style="left:325.50px;top:367.65px;font-size:7.8px;letter-spacing:0px;color:#dcdcdc;font-weight:normal;line-height:10px;-webkit-text-stroke:0.35px #dcdcdc;transform:scaleX(0.853);transform-origin:0 0;">9/19/2022 1:20 PM</div><div class="a" style="left:419.30px;top:367.65px;font-size:7.8px;letter-spacing:0px;color:#dcdcdc;font-weight:normal;line-height:10px;-webkit-text-stroke:0.35px #dcdcdc;transform:scaleX(0.868);transform-origin:0 0;">SharePoint</div><svg class="a" style="left:108.50px;top:385.40px" width="11" height="9" viewBox="0 0 11 9"><ellipse cx="5.5" cy="4.5" rx="5.2" ry="4" fill="#0f2238"/><path d="M2.6 6.4 H8.2 A1.6 1.6 0 0 0 8.4 3.3 A2.4 2.4 0 0 0 4 2.7 A1.9 1.9 0 0 0 2.6 6.4 Z" fill="#d6e6f8"/></svg><svg class="a" style="left:120.20px;top:383.40px" width="12" height="14" viewBox="0 0 12 14"><rect x="0.5" y="0.3" width="10.5" height="13.2" rx="1.2" fill="#f0eaea"/><rect x="0.5" y="4.6" width="10.5" height="6" fill="#d42034"/><path d="M3 6.3 V9 M3 6.3 H4.4 V7.5 H3 M5.5 6.3 V9 H6.5 Q7.2 9 7.2 7.6 Q7.2 6.3 6.5 6.3 Z M8.4 9 V6.3 H9.8 M8.4 7.6 H9.5" stroke="#f6c8cc" stroke-width="0.6" fill="none"/><rect x="0" y="9.2" width="4.4" height="4.6" fill="#e6efe6" stroke="#222" stroke-width="0.5"/><rect x="1.2" y="10.6" width="2" height="2" fill="#6a8a6a"/></svg><svg class="a" style="left:138.75px;top:383.90px" width="178" height="12" viewBox="0 0 178 12"><defs><filter id="bl8" x="-10%" y="-50%" width="120%" height="200%"><feGaussianBlur stdDeviation="1.1"/></filter></defs><polyline points="2.0,6.8 6.3,7.1 10.6,6.7 14.9,5.9 19.2,6.7 23.5,6.8 27.8,6.6 32.1,5.5 36.5,5.5 40.8,5.1 45.1,5.6 49.4,5.7 53.7,5.8 58.0,5.5 62.3,5.1 66.6,5.7 70.9,6.5 75.2,6.9 79.5,6.9 83.8,6.1 88.1,6.4 92.4,6.8 96.7,6.8 101.0,6.6 105.3,6.6 109.7,5.8 114.0,5.8 118.3,5.5 122.6,5.5 126.9,5.7 131.2,5.5 135.5,5.0 139.8,4.9 144.1,5.6 148.4,5.9 152.7,6.2 157.0,6.2 161.3,6.0 165.6,6.4 169.9,6.7 174.2,7.1" stroke="#a6a6a6" stroke-width="4" fill="none" stroke-linecap="round" stroke-linejoin="round" opacity="0.85" filter="url(#bl8)"/></svg><div class="a" style="left:325.50px;top:384.90px;font-size:7.8px;letter-spacing:0px;color:#dcdcdc;font-weight:normal;line-height:10px;-webkit-text-stroke:0.35px #dcdcdc;transform:scaleX(0.853);transform-origin:0 0;">9/19/2022 12:11 PM</div><div class="a" style="left:419.30px;top:384.90px;font-size:7.8px;letter-spacing:0px;color:#dcdcdc;font-weight:normal;line-height:10px;-webkit-text-stroke:0.35px #dcdcdc;transform:scaleX(0.868);transform-origin:0 0;">SharePoint</div><svg class="a" style="left:120.00px;top:402.15px" width="13" height="10" viewBox="0 0 13 10"><ellipse cx="6.5" cy="5.5" rx="4.5" ry="3.6" fill="#5a4a44"/><ellipse cx="6.5" cy="4.5" rx="3" ry="2" fill="#7a6a60"/></svg><div class="a" style="left:138.75px;top:402.15px;font-size:7.8px;letter-spacing:0px;color:#e4e4e4;font-weight:normal;line-height:10px;-webkit-text-stroke:0.35px #e4e4e4;transform:scaleX(0.89);transform-origin:0 0;">Wnidows 11 controller bar.bmp</div><div class="a" style="left:325.50px;top:402.15px;font-size:7.8px;letter-spacing:0px;color:#dcdcdc;font-weight:normal;line-height:10px;-webkit-text-stroke:0.35px #dcdcdc;transform:scaleX(0.853);transform-origin:0 0;">9/19/2022 11:44 AM</div><div class="a" style="left:419.30px;top:402.15px;font-size:7.8px;letter-spacing:0px;color:#dcdcdc;font-weight:normal;line-height:10px;-webkit-text-stroke:0.35px #dcdcdc;transform:scaleX(0.868);transform-origin:0 0;">Pictures\XDA\Windows 11 HDR</div><div class="a" style="left:120.00px;top:419.90px;width:13px;height:9px;background:#232323"></div><div class="a" style="left:138.75px;top:419.40px;font-size:7.8px;letter-spacing:0px;color:#e4e4e4;font-weight:normal;line-height:10px;-webkit-text-stroke:0.35px #e4e4e4;transform:scaleX(0.89);transform-origin:0 0;">Optimizaions for windowed games in Settings.jpg</div><div class="a" style="left:325.50px;top:419.40px;font-size:7.8px;letter-spacing:0px;color:#dcdcdc;font-weight:normal;line-height:10px;-webkit-text-stroke:0.35px #dcdcdc;transform:scaleX(0.853);transform-origin:0 0;">9/19/2022 11:34 AM</div><div class="a" style="left:419.30px;top:419.40px;font-size:7.8px;letter-spacing:0px;color:#dcdcdc;font-weight:normal;line-height:10px;-webkit-text-stroke:0.35px #dcdcdc;transform:scaleX(0.868);transform-origin:0 0;">Pictures\XDA\Windows 11 HDR</div><div class="a" style="left:120.00px;top:439.65px;width:13px;height:4px;background:#c8dcf0;border-left:3px solid #3a8ad0"></div><div class="a" style="left:138.75px;top:436.65px;font-size:7.8px;letter-spacing:0px;color:#e4e4e4;font-weight:normal;line-height:10px;-webkit-text-stroke:0.35px #e4e4e4;transform:scaleX(0.89);transform-origin:0 0;">Windows 11 HDR Calibration.jpg</div><div class="a" style="left:325.50px;top:436.65px;font-size:7.8px;letter-spacing:0px;color:#dcdcdc;font-weight:normal;line-height:10px;-webkit-text-stroke:0.35px #dcdcdc;transform:scaleX(0.853);transform-origin:0 0;">9/19/2022 11:31 AM</div><div class="a" style="left:419.30px;top:436.65px;font-size:7.8px;letter-spacing:0px;color:#dcdcdc;font-weight:normal;line-height:10px;-webkit-text-stroke:0.35px #dcdcdc;transform:scaleX(0.868);transform-origin:0 0;">Pictures\XDA\Windows 11 HDR</div><div class="a" style="left:0.00px;top:0.00px;width:1.6px;height:461px;background:#111114"></div><div class="a" style="left:766.50px;top:0.00px;width:2.5px;height:461px;background:#161616"></div><div class="a" style="left:0.00px;top:0.00px;width:769px;height:0.8px;background:#181818"></div>
</div>
</body></html>
